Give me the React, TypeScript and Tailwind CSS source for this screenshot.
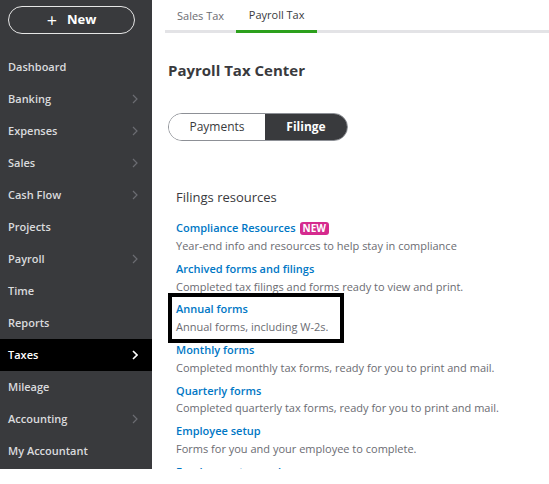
import React from "react";

const navItems: { label: string; chevron?: boolean; active?: boolean }[] = [
  { label: "Dashboard" },
  { label: "Banking", chevron: true },
  { label: "Expenses", chevron: true },
  { label: "Sales", chevron: true },
  { label: "Cash Flow", chevron: true },
  { label: "Projects" },
  { label: "Payroll", chevron: true },
  { label: "Time" },
  { label: "Reports" },
  { label: "Taxes", chevron: true, active: true },
  { label: "Mileage" },
  { label: "Accounting", chevron: true },
  { label: "My Accountant" },
];

const resources: { title: string; desc: string; isNew?: boolean; boxed?: boolean }[] = [
  { title: "Compliance Resources", desc: "Year-end info and resources to help stay in compliance", isNew: true },
  { title: "Archived forms and filings", desc: "Completed tax filings and forms ready to view and print." },
  { title: "Annual forms", desc: "Annual forms, including W-2s.", boxed: true },
  { title: "Monthly forms", desc: "Completed monthly tax forms, ready for you to print and mail." },
  { title: "Quarterly forms", desc: "Completed quarterly tax forms, ready for you to print and mail." },
  { title: "Employee setup", desc: "Forms for you and your employee to complete." },
  { title: "Employment records", desc: "Records of your employees." },
];

function Chevron({ active }: { active?: boolean }) {
  return (
    <svg width="6" height="10" viewBox="0 0 6 10" fill="none">
      <path d="M1 1l4 4-4 4" stroke={active ? "#ffffff" : "#6b6c72"} strokeWidth={active ? 1.6 : 1.2} />
    </svg>
  );
}

export default function App() {
  return (
    <div
      className="flex h-[469px] w-[549px] overflow-hidden bg-white"
      style={{ fontFamily: '"Open Sans", "Noto Sans", sans-serif' }}
    >
      <aside className="flex w-[152px] shrink-0 flex-col bg-[#393a3d]">
        <div className="px-2 pt-[6px]">
          <button className="flex h-[28px] w-[127px] items-center justify-center gap-[10px] rounded-full border border-[#e6e6e6] text-[13px] font-bold text-white">
            <span className="text-[18px] font-normal leading-none">+</span>
            <span>New</span>
          </button>
        </div>
        <nav className="mt-[17px] flex flex-col">
          {navItems.map((item) => (
            <div
              key={item.label}
              className={`flex h-[32px] items-center justify-between pl-2 pr-[14px] text-[11px] font-semibold ${
                item.active ? "bg-black text-white" : "text-[#dadbdd]"
              }`}
            >
              <span>{item.label}</span>
              {item.chevron && <Chevron active={item.active} />}
            </div>
          ))}
        </nav>
      </aside>
      <main className="flex-1 pl-[13px]">
        <div className="flex h-[33px] items-end border-b-[3px] border-[#e3e3e6]">
          <div className="mb-[-3px] ml-[12px] flex h-[33px] items-center text-[11px] text-[#6b6c72]">Sales Tax</div>
          <div className="mb-[-3px] ml-[12px] flex h-[33px] w-[81px] items-center justify-center border-b-[3px] border-[#2ca01c] text-[11px] text-[#393a3d]">
            Payroll Tax
          </div>
        </div>
        <div className="pl-[3px]">
          <h1 className="mt-[26px] text-[15px] font-bold text-[#393a3d]">Payroll Tax Center</h1>
          <div className="mt-[31px] flex h-[28px] w-[180px] overflow-hidden rounded-full border border-[#8d9096] text-[12px]">
            <div className="flex w-[96px] items-center justify-center bg-white text-[#393a3d]">Payments</div>
            <div className="flex flex-1 items-center justify-center bg-[#393a3d] font-bold text-white">Filinge</div>
          </div>
          <h2 className="mt-[47px] pl-2 text-[13px] text-[#393a3d]">Filings resources</h2>
          <div className="mt-[13px] flex flex-col pl-2">
            {resources.map((r) => (
              <div key={r.title} className="relative mb-[5.6px] flex flex-col">
                {r.boxed && (
                  <span className="pointer-events-none absolute left-[-8px] top-[-8px] h-[50px] w-[176px] border-4 border-black" />
                )}
                <div className="flex h-[17px] items-center gap-1 text-[11px] font-semibold text-[#0077c5]">
                  <span>{r.title}</span>
                  {r.isNew && (
                    <span className="rounded-[3px] bg-[#d52b8e] px-[3px] text-[10px] font-bold leading-[13px] text-white">NEW</span>
                  )}
                </div>
                <div className="h-[18px] text-[11px] leading-[18px] text-[#6b6c72]">{r.desc}</div>
              </div>
            ))}
          </div>
        </div>
      </main>
    </div>
  );
}
